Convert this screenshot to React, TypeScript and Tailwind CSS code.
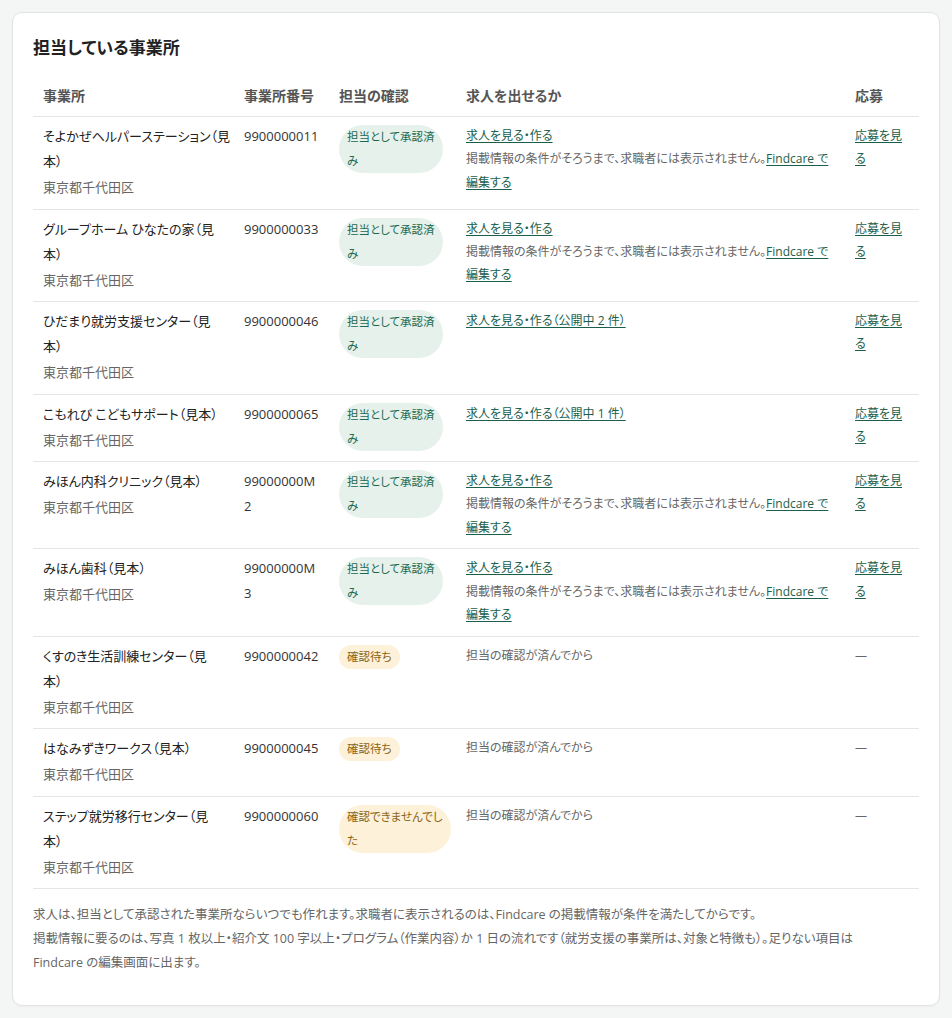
type Status = "approved" | "pending" | "rejected";

type Office = {
  name: string[];
  area: string;
  code: string;
  status: Status;
  jobs?: string;
  needsEdit?: boolean;
};

// 行の折り返しは画面の見本どおりに分けておく
const offices: Office[] = [
  { name: ["そよかぜヘルパーステーション（見", "本）"], area: "東京都千代田区", code: "9900000011", status: "approved", jobs: "求人を見る・作る", needsEdit: true },
  { name: ["グループホーム ひなたの家（見", "本）"], area: "東京都千代田区", code: "9900000033", status: "approved", jobs: "求人を見る・作る", needsEdit: true },
  { name: ["ひだまり就労支援センター（見", "本）"], area: "東京都千代田区", code: "9900000046", status: "approved", jobs: "求人を見る・作る（公開中 2 件）" },
  { name: ["こもれび こどもサポート（見本）"], area: "東京都千代田区", code: "9900000065", status: "approved", jobs: "求人を見る・作る（公開中 1 件）" },
  { name: ["みほん内科クリニック（見本）"], area: "東京都千代田区", code: "99000000M2", status: "approved", jobs: "求人を見る・作る", needsEdit: true },
  { name: ["みほん歯科（見本）"], area: "東京都千代田区", code: "99000000M3", status: "approved", jobs: "求人を見る・作る", needsEdit: true },
  { name: ["くすのき生活訓練センター（見", "本）"], area: "東京都千代田区", code: "9900000042", status: "pending" },
  { name: ["はなみずきワークス（見本）"], area: "東京都千代田区", code: "9900000045", status: "pending" },
  { name: ["ステップ就労移行センター（見", "本）"], area: "東京都千代田区", code: "9900000060", status: "rejected" },
];

const badgeLines: Record<Status, string[]> = {
  approved: ["担当として承認済", "み"],
  pending: ["確認待ち"],
  rejected: ["確認できませんでし", "た"],
};

function StatusBadge({ status }: { status: Status }) {
  const color =
    status === "approved" ? "bg-[#e6f1ec] text-[#1b6a4f]" : "bg-[#fdf1d9] text-[#8a6414]";
  return (
    <div className={`mt-px w-fit rounded-full px-2 text-[11.5px] leading-[24px] ${color}`}>
      {badgeLines[status].map((line) => (
        <span key={line} className="block whitespace-nowrap">
          {line}
        </span>
      ))}
    </div>
  );
}

export default function App() {
  return (
    <div className="min-h-screen bg-[#f4f6f5] p-3 font-['Open_Sans','Noto_Sans_CJK_JP',sans-serif] [font-feature-settings:'palt']">
      <div className="rounded-[10px] border border-[#e1e4e2] bg-white px-5 pt-[22px] pb-[30px] shadow-[0_1px_2px_rgba(0,0,0,0.03)]">
        <h2 className="mb-[15px] text-[17px] font-bold leading-[26px] text-[#222]">担当している事業所</h2>

        <table className="w-full table-fixed border-collapse text-left">
          <thead>
            <tr className="border-b border-[#e3e6e4]">
              <th className="w-[201px] px-2.5 pt-2 pb-2 text-[14px] font-semibold leading-[24px] text-[#555]">事業所</th>
              <th className="w-[95px] px-2.5 pt-2 pb-2 text-[14px] font-semibold leading-[24px] text-[#555]">事業所番号</th>
              <th className="w-[127px] px-2.5 pt-2 pb-2 text-[14px] font-semibold leading-[24px] text-[#555]">担当の確認</th>
              <th className="px-2.5 pt-2 pb-2 text-[14px] font-semibold leading-[24px] text-[#555]">求人を出せるか</th>
              <th className="w-[74px] px-2.5 pt-2 pb-2 text-[14px] font-semibold leading-[24px] text-[#555]">応募</th>
            </tr>
          </thead>
          <tbody>
            {offices.map((o) => (
              <tr key={o.code} className="border-b border-[#e3e6e4] align-top">
                <td className="px-2.5 pt-[7px] pb-[9.5px]">
                  {o.name.map((line) => (
                    <p key={line} className="whitespace-nowrap text-[13px] leading-[25px] text-[#222]">
                      {line}
                    </p>
                  ))}
                  <p className="mt-[2px] text-[13px] leading-[23px] text-[#666]">{o.area}</p>
                </td>
                <td className="px-2.5 pt-[7px] pb-[9.5px] text-[13px] leading-[25px] break-all text-[#333]">{o.code}</td>
                <td className="px-2.5 pt-[7px] pb-[9.5px]">
                  <StatusBadge status={o.status} />
                </td>
                <td className="px-2.5 pt-[7px] pb-[9.5px] text-[12px] leading-[23.3px]">
                  {o.jobs ? (
                    <>
                      <a href="#" className="text-[#1a5e4b] underline underline-offset-2">
                        {o.jobs}
                      </a>
                      {o.needsEdit && (
                        <p className="whitespace-nowrap text-[#666]">
                          掲載情報の条件がそろうまで、求職者には表示されません。
                          <a href="#" className="text-[#1a5e4b] underline underline-offset-2">
                            Findcare で
                            <br />
                            編集する
                          </a>
                        </p>
                      )}
                    </>
                  ) : (
                    <span className="text-[#666]">担当の確認が済んでから</span>
                  )}
                </td>
                <td className="px-2.5 pt-[7px] pb-[9.5px] text-[12px] leading-[23.3px]">
                  {o.status === "approved" ? (
                    <a href="#" className="text-[#1a5e4b] underline underline-offset-2">
                      応募を見る
                    </a>
                  ) : (
                    <span className="text-[#666]">—</span>
                  )}
                </td>
              </tr>
            ))}
          </tbody>
        </table>

        <div className="mt-[14px] text-[12.5px] leading-[24px] text-[#666]">
          <p>求人は、担当として承認された事業所ならいつでも作れます。求職者に表示されるのは、Findcare の掲載情報が条件を満たしてからです。</p>
          <p>
            掲載情報に要るのは、写真 1 枚以上・紹介文 100 字以上・プログラム（作業内容）か 1 日の流れです（就労支援の事業所は、対象と特徴も）。足りない項目は
            <br />
            Findcare の編集画面に出ます。
          </p>
        </div>
      </div>
    </div>
  );
}
